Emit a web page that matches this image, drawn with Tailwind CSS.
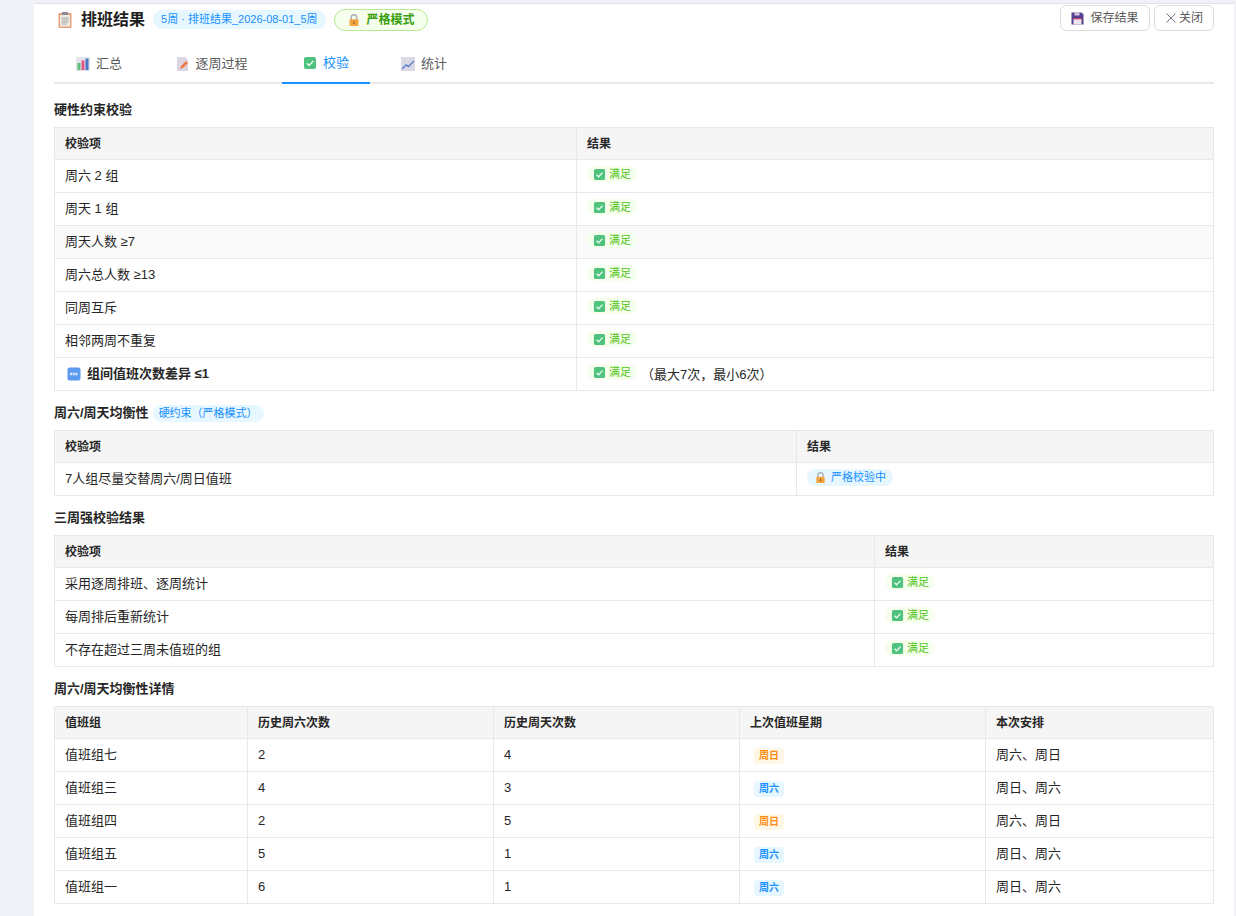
<!DOCTYPE html>
<html lang="zh-CN">
<head>
<meta charset="UTF-8">
<title>排班结果</title>
<script src="https://cdn.jsdelivr.net/npm/@tailwindcss/browser@4"></script>
</head>
<body class="bg-[#f0f2f7] font-['Liberation_Sans','Noto_Sans_CJK_SC',sans-serif] text-[13px] text-[#262626] overflow-hidden">
<svg class="hidden">
  <symbol id="check" viewBox="0 0 14 14"><rect x="1" y="1" width="12" height="12" rx="2" fill="#4fc27e"/><path d="M3.8 7.2l2.3 2.2 4.2-4.4" fill="none" stroke="#e8f8ee" stroke-width="1.5"/></symbol>
  <symbol id="lock" viewBox="0 0 14 14"><path d="M4.2 7V4.6a2.8 2.8 0 015.6 0V7" fill="none" stroke="#a9a9b0" stroke-width="1.4"/><rect x="2.5" y="6.3" width="9" height="6.7" rx="1" fill="#f5a442"/><rect x="6.4" y="8.5" width="1.2" height="2.4" fill="#8a5a20"/></symbol>
</svg>
<div class="ml-[34px] w-[1200px] h-[916px] bg-white border-t border-[#e2e2e6] mt-[3px] px-5">
  <div class="flex justify-between h-[40px]">
    <div class="flex items-center h-[30px] pt-[1px]">
      <svg class="w-[18px] h-[18px] ml-[2px] mr-[7px]" viewBox="0 0 18 18"><rect x="2.5" y="2" width="13" height="15" rx="1" fill="#e8a27a"/><rect x="4" y="4" width="10" height="11.5" fill="#eeeae6"/><rect x="6" y="1" width="6" height="3" rx=".5" fill="#8d8790"/><path d="M5.5 7h7M5.5 9h7M5.5 11h7M5.5 13h5" stroke="#aaa5a5"/></svg>
      <h1 class="text-[16px] font-semibold text-[#1f1f1f] leading-6">排班结果</h1>
      <span class="ml-2 h-[19px] px-2 rounded-full bg-[#e6f7ff] text-[#1890ff] text-[11px] leading-[19px]">5周 · 排班结果_2026-08-01_5周</span>
      <span class="ml-2 h-[22px] px-[12px] rounded-full bg-[#f6ffed] border border-[#b7eb8f] text-[#389e0d] text-[12px] font-semibold flex items-center gap-[6px]"><svg class="w-[14px] h-[14px]"><use href="#lock"/></svg>严格模式</span>
    </div>
    <div class="flex gap-1 pt-[1px]">
      <button class="h-[26px] w-[90px] rounded-md border border-[#dcdcdc] text-[#595959] text-[12px] flex items-center justify-center gap-[6px]">
        <svg class="w-[13px] h-[13px]" viewBox="0 0 13 13"><path d="M0.5 0.5h10l2 2v10h-12z" fill="#59408f"/><rect x="2.5" y="7" width="8" height="5.5" fill="#eee3ee"/><rect x="2.5" y="6" width="8" height="1.3" fill="#c2406f"/><rect x="3.5" y="0.5" width="5" height="3" fill="#cfc8e0"/></svg>保存结果</button>
      <button class="h-[26px] w-[60px] rounded-md border border-[#dcdcdc] text-[#595959] text-[12px] flex items-center justify-center gap-[2px]">
        <svg class="w-[12px] h-[12px]" viewBox="0 0 12 12"><path d="M1.5 1.5l9 9M10.5 1.5l-9 9" stroke="#6d7480" fill="none"/></svg>关闭</button>
    </div>
  </div>
  <div class="flex h-[40px] border-b-2 border-[#e8e8e8] text-[#595959]">
    <div class="w-[88px] mr-[26px] -mb-[2px] flex items-center justify-center gap-[6px] pl-[2px]">
      <svg class="w-[14px] h-[14px]" viewBox="0 0 14 14"><rect width="14" height="14" fill="#e4e2ea"/><rect x="1.5" y="6" width="3" height="7" fill="#5ac47d"/><rect x="5.5" y="3.5" width="3" height="9.5" fill="#e2588a"/><rect x="9.5" y="1.5" width="3" height="11.5" fill="#4a78c8"/></svg>汇总</div>
    <div class="w-[88px] mr-[26px] -mb-[2px] flex items-center justify-center gap-[6px] whitespace-nowrap">
      <svg class="w-[13px] h-[14px]" viewBox="0 0 13 14"><path d="M1 0h8l3 3v11H1z" fill="#dcd4e2"/><path d="M4 12l1-3 5-5 2 2-5 5z" fill="#ee7a45"/></svg>逐周过程</div>
    <div class="w-[88px] mr-[10px] -mb-[2px] flex items-center justify-center gap-[6px] text-[#1890ff] border-b-2 border-[#1890ff]">
      <svg class="w-[14px] h-[14px]"><use href="#check"/></svg>校验</div>
    <div class="w-[88px] -mb-[2px] flex items-center justify-center gap-[6px]">
      <svg class="w-[14px] h-[14px]" viewBox="0 0 14 14"><rect width="14" height="14" fill="#dcd8e4"/><path d="M1 12l4-4 2.5 1.5L13 4" fill="none" stroke="#5c8ad0" stroke-width="1.5"/></svg>统计</div>
  </div>

  <h2 class="mt-[15px] mb-[6px] h-[22px] leading-[22px] font-semibold text-[13px]">硬性约束校验</h2>
  <table class="w-[1160px] table-fixed border-collapse">
    <colgroup><col class="w-[522px]"><col></colgroup>
    <thead><tr class="h-[32px] bg-[#f5f5f5] text-left text-[12px]"><th class="border border-[#e8e8e8] px-[10px] font-semibold">校验项</th><th class="border border-[#e8e8e8] px-[10px] font-semibold">结果</th></tr></thead>
    <tbody>
      <tr class="h-[33px]"><td class="border border-[#e8e8e8] px-[10px]">周六 2 组</td><td class="border border-[#e8e8e8] px-[10px]"><span class="inline-flex items-center gap-[3px] h-[16px] px-[6px] rounded-full bg-[#f6ffed] text-[#52c41a] text-[11px]"><svg class="w-[13px] h-[13px]"><use href="#check"/></svg>满足</span></td></tr>
      <tr class="h-[33px]"><td class="border border-[#e8e8e8] px-[10px]">周天 1 组</td><td class="border border-[#e8e8e8] px-[10px]"><span class="inline-flex items-center gap-[3px] h-[16px] px-[6px] rounded-full bg-[#f6ffed] text-[#52c41a] text-[11px]"><svg class="w-[13px] h-[13px]"><use href="#check"/></svg>满足</span></td></tr>
      <tr class="h-[33px] bg-[#fafafa]"><td class="border border-[#e8e8e8] px-[10px]">周天人数 ≥7</td><td class="border border-[#e8e8e8] px-[10px]"><span class="inline-flex items-center gap-[3px] h-[16px] px-[6px] rounded-full bg-[#f6ffed] text-[#52c41a] text-[11px]"><svg class="w-[13px] h-[13px]"><use href="#check"/></svg>满足</span></td></tr>
      <tr class="h-[33px]"><td class="border border-[#e8e8e8] px-[10px]">周六总人数 ≥13</td><td class="border border-[#e8e8e8] px-[10px]"><span class="inline-flex items-center gap-[3px] h-[16px] px-[6px] rounded-full bg-[#f6ffed] text-[#52c41a] text-[11px]"><svg class="w-[13px] h-[13px]"><use href="#check"/></svg>满足</span></td></tr>
      <tr class="h-[33px]"><td class="border border-[#e8e8e8] px-[10px]">同周互斥</td><td class="border border-[#e8e8e8] px-[10px]"><span class="inline-flex items-center gap-[3px] h-[16px] px-[6px] rounded-full bg-[#f6ffed] text-[#52c41a] text-[11px]"><svg class="w-[13px] h-[13px]"><use href="#check"/></svg>满足</span></td></tr>
      <tr class="h-[33px]"><td class="border border-[#e8e8e8] px-[10px]">相邻两周不重复</td><td class="border border-[#e8e8e8] px-[10px]"><span class="inline-flex items-center gap-[3px] h-[16px] px-[6px] rounded-full bg-[#f6ffed] text-[#52c41a] text-[11px]"><svg class="w-[13px] h-[13px]"><use href="#check"/></svg>满足</span></td></tr>
      <tr class="h-[33px]"><td class="border border-[#e8e8e8] px-[10px] font-semibold"><span class="flex items-center gap-[6px] pl-[2px]"><svg class="w-[14px] h-[14px]" viewBox="0 0 14 14"><rect x=".5" y=".5" width="13" height="13" rx="2" fill="#5b9af0"/><path d="M3 7h8" stroke="#dce9fb" stroke-width="2.4" stroke-dasharray="2 .6"/></svg>组间值班次数差异 ≤1</span></td><td class="border border-[#e8e8e8] px-[10px]"><span class="inline-flex items-center gap-[3px] h-[16px] px-[6px] rounded-full bg-[#f6ffed] text-[#52c41a] text-[11px]"><svg class="w-[13px] h-[13px]"><use href="#check"/></svg>满足</span><span class="ml-1">（最大7次，最小6次）</span></td></tr>
    </tbody>
  </table>

  <h2 class="mt-[11px] mb-[6px] h-[22px] leading-[22px] font-semibold text-[13px] flex items-center">周六/周天均衡性<span class="ml-1 h-[17px] leading-[17px] px-[6px] w-[111px] whitespace-nowrap rounded-full bg-[#e6f7ff] text-[#1890ff] text-[11px] font-normal">硬约束（严格模式）</span></h2>
  <table class="w-[1160px] table-fixed border-collapse">
    <colgroup><col class="w-[742px]"><col></colgroup>
    <thead><tr class="h-[32px] bg-[#f5f5f5] text-left text-[12px]"><th class="border border-[#e8e8e8] px-[10px] font-semibold">校验项</th><th class="border border-[#e8e8e8] px-[10px] font-semibold">结果</th></tr></thead>
    <tbody>
      <tr class="h-[33px]"><td class="border border-[#e8e8e8] px-[10px]">7人组尽量交替周六/周日值班</td><td class="border border-[#e8e8e8] px-[10px]"><span class="inline-flex items-center gap-[4px] h-[17px] px-[7px] rounded-full bg-[#e6f7ff] text-[#1890ff] text-[11px]"><svg class="w-[13px] h-[13px]"><use href="#lock"/></svg>严格校验中</span></td></tr>
    </tbody>
  </table>

  <h2 class="mt-[11px] mb-[6px] h-[22px] leading-[22px] font-semibold text-[13px]">三周强校验结果</h2>
  <table class="w-[1160px] table-fixed border-collapse">
    <colgroup><col class="w-[820px]"><col></colgroup>
    <thead><tr class="h-[32px] bg-[#f5f5f5] text-left text-[12px]"><th class="border border-[#e8e8e8] px-[10px] font-semibold">校验项</th><th class="border border-[#e8e8e8] px-[10px] font-semibold">结果</th></tr></thead>
    <tbody>
      <tr class="h-[33px]"><td class="border border-[#e8e8e8] px-[10px]">采用逐周排班、逐周统计</td><td class="border border-[#e8e8e8] px-[10px]"><span class="inline-flex items-center gap-[3px] h-[16px] px-[6px] rounded-full bg-[#f6ffed] text-[#52c41a] text-[11px]"><svg class="w-[13px] h-[13px]"><use href="#check"/></svg>满足</span></td></tr>
      <tr class="h-[33px]"><td class="border border-[#e8e8e8] px-[10px]">每周排后重新统计</td><td class="border border-[#e8e8e8] px-[10px]"><span class="inline-flex items-center gap-[3px] h-[16px] px-[6px] rounded-full bg-[#f6ffed] text-[#52c41a] text-[11px]"><svg class="w-[13px] h-[13px]"><use href="#check"/></svg>满足</span></td></tr>
      <tr class="h-[33px]"><td class="border border-[#e8e8e8] px-[10px]">不存在超过三周未值班的组</td><td class="border border-[#e8e8e8] px-[10px]"><span class="inline-flex items-center gap-[3px] h-[16px] px-[6px] rounded-full bg-[#f6ffed] text-[#52c41a] text-[11px]"><svg class="w-[13px] h-[13px]"><use href="#check"/></svg>满足</span></td></tr>
    </tbody>
  </table>

  <h2 class="mt-[11px] mb-[6px] h-[22px] leading-[22px] font-semibold text-[13px]">周六/周天均衡性详情</h2>
  <table class="w-[1160px] table-fixed border-collapse">
    <colgroup><col class="w-[193px]"><col class="w-[246px]"><col class="w-[246px]"><col class="w-[246px]"><col></colgroup>
    <thead><tr class="h-[32px] bg-[#f5f5f5] text-left text-[12px]"><th class="border border-[#e8e8e8] px-[10px] font-semibold">值班组</th><th class="border border-[#e8e8e8] px-[10px] font-semibold">历史周六次数</th><th class="border border-[#e8e8e8] px-[10px] font-semibold">历史周天次数</th><th class="border border-[#e8e8e8] px-[10px] font-semibold">上次值班星期</th><th class="border border-[#e8e8e8] px-[10px] font-semibold">本次安排</th></tr></thead>
    <tbody>
      <tr class="h-[33px]"><td class="border border-[#e8e8e8] px-[10px]">值班组七</td><td class="border border-[#e8e8e8] px-[10px]">2</td><td class="border border-[#e8e8e8] px-[10px]">4</td><td class="border border-[#e8e8e8] px-[10px]"><span class="ml-[4px] inline-block w-[30px] h-[16px] leading-[16px] text-center rounded bg-[#fff7e6] text-[#fa8c16] text-[10px] font-semibold">周日</span></td><td class="border border-[#e8e8e8] px-[10px]">周六、周日</td></tr>
      <tr class="h-[33px]"><td class="border border-[#e8e8e8] px-[10px]">值班组三</td><td class="border border-[#e8e8e8] px-[10px]">4</td><td class="border border-[#e8e8e8] px-[10px]">3</td><td class="border border-[#e8e8e8] px-[10px]"><span class="ml-[4px] inline-block w-[30px] h-[16px] leading-[16px] text-center rounded bg-[#e6f7ff] text-[#1890ff] text-[10px] font-semibold">周六</span></td><td class="border border-[#e8e8e8] px-[10px]">周日、周六</td></tr>
      <tr class="h-[33px]"><td class="border border-[#e8e8e8] px-[10px]">值班组四</td><td class="border border-[#e8e8e8] px-[10px]">2</td><td class="border border-[#e8e8e8] px-[10px]">5</td><td class="border border-[#e8e8e8] px-[10px]"><span class="ml-[4px] inline-block w-[30px] h-[16px] leading-[16px] text-center rounded bg-[#fff7e6] text-[#fa8c16] text-[10px] font-semibold">周日</span></td><td class="border border-[#e8e8e8] px-[10px]">周六、周日</td></tr>
      <tr class="h-[33px]"><td class="border border-[#e8e8e8] px-[10px]">值班组五</td><td class="border border-[#e8e8e8] px-[10px]">5</td><td class="border border-[#e8e8e8] px-[10px]">1</td><td class="border border-[#e8e8e8] px-[10px]"><span class="ml-[4px] inline-block w-[30px] h-[16px] leading-[16px] text-center rounded bg-[#e6f7ff] text-[#1890ff] text-[10px] font-semibold">周六</span></td><td class="border border-[#e8e8e8] px-[10px]">周日、周六</td></tr>
      <tr class="h-[33px]"><td class="border border-[#e8e8e8] px-[10px]">值班组一</td><td class="border border-[#e8e8e8] px-[10px]">6</td><td class="border border-[#e8e8e8] px-[10px]">1</td><td class="border border-[#e8e8e8] px-[10px]"><span class="ml-[4px] inline-block w-[30px] h-[16px] leading-[16px] text-center rounded bg-[#e6f7ff] text-[#1890ff] text-[10px] font-semibold">周六</span></td><td class="border border-[#e8e8e8] px-[10px]">周日、周六</td></tr>
    </tbody>
  </table>
</div>
</body>
</html>
